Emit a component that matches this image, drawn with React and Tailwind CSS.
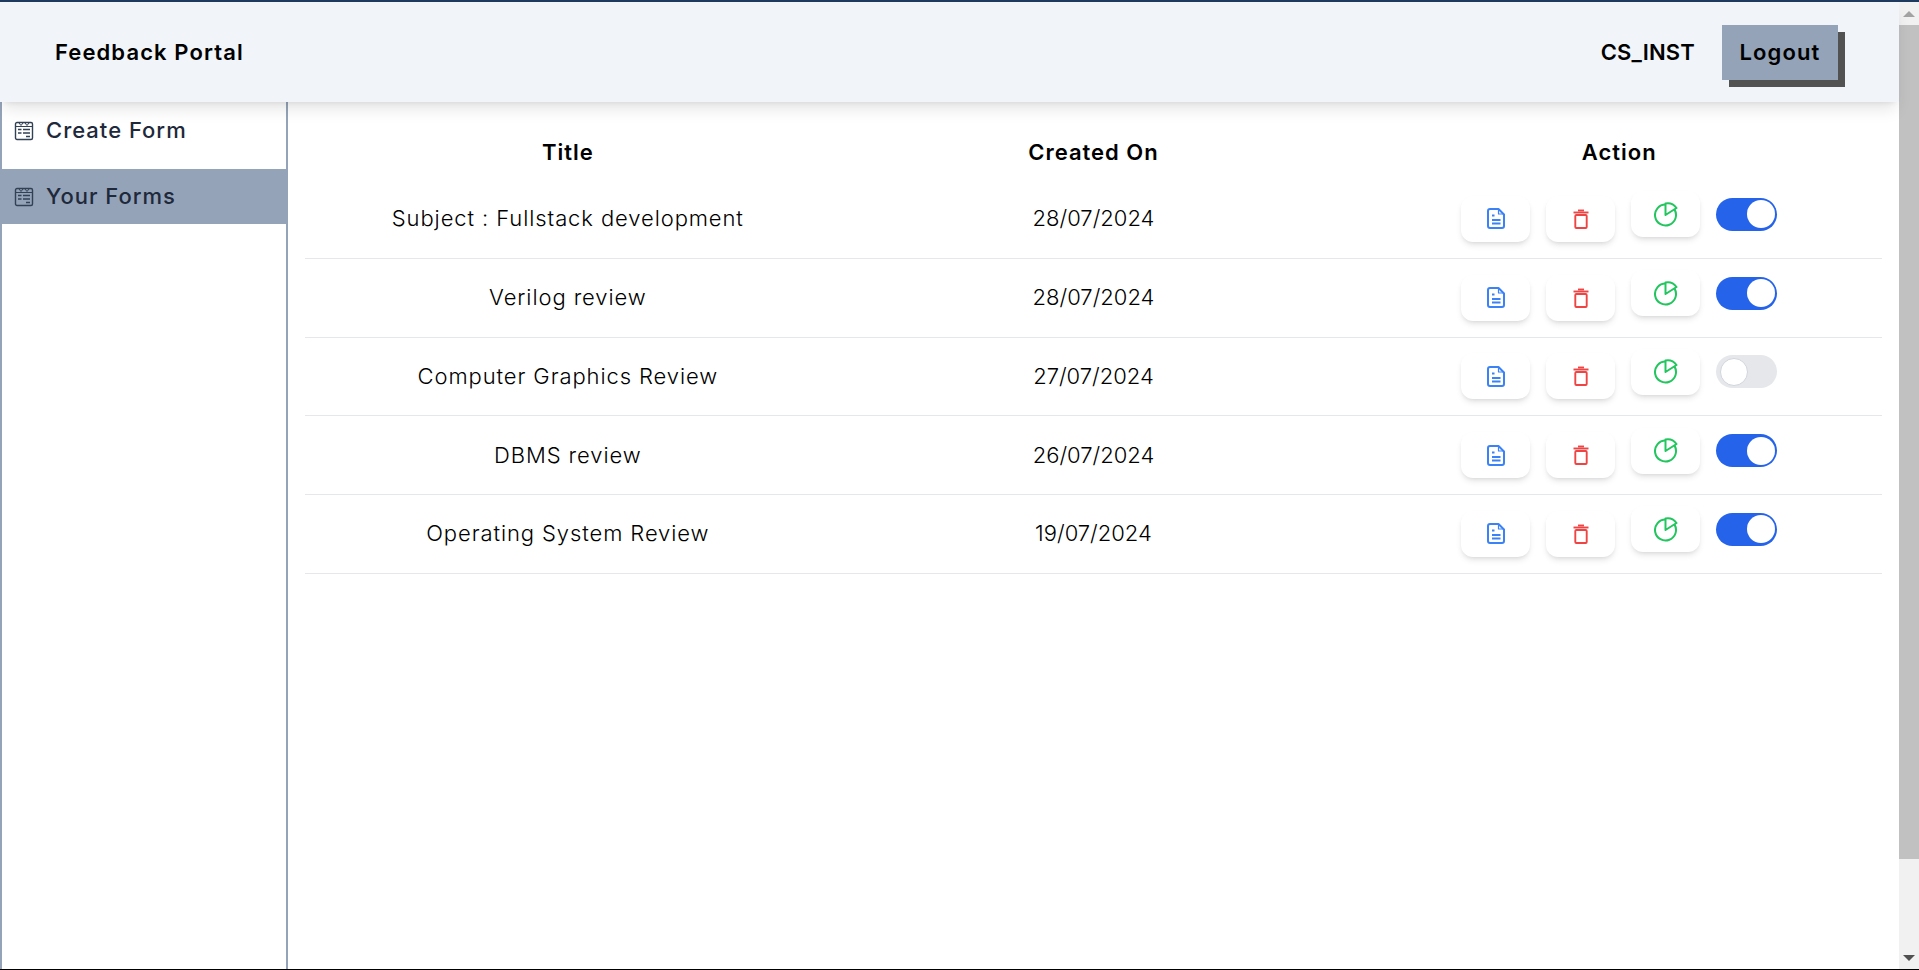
import React from "react";

const font = { fontFamily: "Inter" };

function FormIcon() {
  return (
    <svg width="20" height="20" viewBox="0 0 20 20" fill="none" stroke="#334155" strokeWidth="1.4" className="shrink-0">
      <rect x="1.5" y="1.5" width="17" height="17" rx="1.5" />
      <path d="M5 2 7 4.5 9 2M11 2l2 2.5L15 2" strokeWidth="1" />
      <path d="M1.5 5.5h17" strokeWidth="1" />
      <path d="M4 8.5h3.5M9 8.5h7M4 12h3.5M9 12h7M12 15.5h4" />
    </svg>
  );
}
function DocIcon() {
  return (
    <svg width="18" height="21" viewBox="0 0 18 21" fill="none" stroke="#3b82f6" strokeWidth="2" strokeLinejoin="round">
      <path d="M3 1h8.5L17 6.5V18a2 2 0 0 1-2 2H3a2 2 0 0 1-2-2V3a2 2 0 0 1 2-2z" />
      <path d="M11.5 1.5v4.5H17" strokeWidth="1.2" />
      <path d="M5 7.5h2.5M5 12h8.5M5 15.5h8.5" />
    </svg>
  );
}
function TrashIcon() {
  return (
    <svg width="16" height="20" viewBox="0 0 16 20" fill="none" stroke="#ef4444" strokeWidth="1.9">
      <path d="M0.5 3.5h15" />
      <path d="M5 1.5h6" />
      <rect x="2.3" y="6" width="11.4" height="13" rx="1" />
    </svg>
  );
}
function PieIcon() {
  return (
    <svg width="24" height="25" viewBox="0 0 24 25" fill="none" stroke="#22c55e" strokeWidth="2" strokeLinejoin="round">
      <path d="M11.5 2.5A10.5 10.5 0 1 0 20.4 7.4" />
      <path d="M11.5 13V1.5A11 11 0 0 1 22.5 6z" />
    </svg>
  );
}
function Toggle({ on }) {
  return (
    <div className={`w-[61px] h-[33px] rounded-full flex items-center p-[2px] ${on ? "bg-[#2563eb] justify-end" : "bg-[#e5e7eb] justify-start"}`}>
      <div className={`w-[28px] h-[28px] rounded-full bg-white ${on ? "" : "border border-gray-300 ml-[2px]"}`} />
    </div>
  );
}
function ActionButton({ children, raised }) {
  return (
    <div className={`w-[69px] h-[46px] rounded-xl bg-white shadow-md flex items-center justify-center ${raised ? "-mt-[9px]" : ""}`}>
      {children}
    </div>
  );
}
const rows = [
  ["Subject : Fullstack development", "28/07/2024", true],
  ["Verilog review", "28/07/2024", true],
  ["Computer Graphics Review", "27/07/2024", false],
  ["DBMS review", "26/07/2024", true],
  ["Operating System Review", "19/07/2024", true],
];

export default function App() {
  return (
    <div style={font} className="relative flex h-[970px] w-full flex-col overflow-hidden bg-white text-black">
      <div className="h-[2px] bg-[#1e3a5f]" />
      <div className="flex min-h-0 flex-1">
        <div className="flex min-w-0 flex-1 flex-col">
          <header className="relative z-10 flex h-[100px] items-center justify-between bg-[#f1f5f9] pl-[55px] pr-[61px] shadow-lg">
            <span className="text-[22px] font-semibold tracking-[1.1px]">Feedback Portal</span>
            <div className="flex items-center">
              <span className="mr-[27px] text-[22px] font-semibold tracking-[0.15px]">CS_INST</span>
              <button className="h-[55px] w-[116px] bg-[#94a3b8] text-[22px] font-semibold tracking-[1.1px] shadow-[7px_7px_0_#525252]">Logout</button>
            </div>
          </header>
          <div className="flex min-h-0 flex-1">
            <aside className="w-[288px] shrink-0 border-x-2 border-[#94a3b8]">
              <div className="flex h-[67px] items-center gap-[12px] pb-[10px] pl-[12px] text-[22px] font-medium tracking-[1px] text-[#1e293b]">
                <FormIcon />Create Form
              </div>
              <div className="-mx-[2px] flex h-[55px] items-center gap-[12px] bg-[#94a3b8] pl-[14px] text-[22px] font-medium tracking-[1px] text-[#1e293b]">
                <FormIcon />Your Forms
              </div>
            </aside>
            <main className="min-w-0 flex-1 px-[17px]">
              <div className="grid h-[78px] grid-cols-3 items-center pt-[23px] text-center text-[22px] font-semibold tracking-[1px]">
                <div>Title</div>
                <div>Created On</div>
                <div>Action</div>
              </div>
              {rows.map(([title, date, on]) => (
                <div key={title} className="grid h-[78.75px] grid-cols-3 items-center border-b border-[#e5e7eb] text-center text-[22px] font-light">
                  <div className="tracking-[0.9px]">{title}</div>
                  <div>{date}</div>
                  <div className="flex items-center gap-[16px] pl-[105px]">
                    <ActionButton><DocIcon /></ActionButton>
                    <ActionButton><TrashIcon /></ActionButton>
                    <ActionButton raised><PieIcon /></ActionButton>
                    <div className="-mt-[9px]"><Toggle on={on} /></div>
                  </div>
                </div>
              ))}
            </main>
          </div>
        </div>
        <div className="flex w-[20px] shrink-0 flex-col items-center bg-[#f1f1f1]">
          <div className="flex h-[23px] items-center justify-center">
            <div className="h-0 w-0 border-x-[6px] border-b-[6px] border-x-transparent border-b-[#a3a3a3]" />
          </div>
          <div className="h-[834px] w-full bg-[#c1c1c1]" />
          <div className="flex flex-1 items-end justify-center pb-[8px]">
            <div className="h-0 w-0 border-x-[6px] border-t-[6px] border-x-transparent border-t-[#505050]" />
          </div>
        </div>
      </div>
      <div className="h-[1px] bg-black" />
    </div>
  );
}
